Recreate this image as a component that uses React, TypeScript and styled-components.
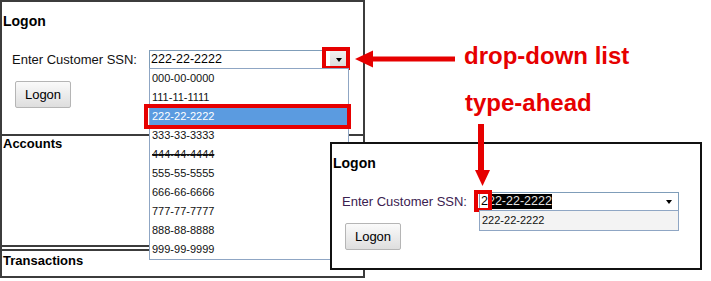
import React from "react";
import styled, { createGlobalStyle, css } from "styled-components";

const GlobalStyle = createGlobalStyle`
  html, body { margin: 0; padding: 0; background: #fff; }
  body { font-family: "Liberation Sans", Arial, sans-serif; }
`;

const RED = "#e60000";

const Canvas = styled.div`
  position: relative;
  width: 711px;
  height: 281px;
  display: flex;
  align-items: flex-start;
  overflow: hidden;
  background: #fff;
`;

const Window = styled.div<{ $overlay?: boolean }>`
  box-sizing: border-box;
  display: flex;
  flex-direction: column;
  background: #fff;
  ${(p) =>
    p.$overlay
      ? css`
          position: absolute;
          left: 330px;
          top: 142px;
          width: 372px;
          height: 128px;
          border: 2px solid #111;
          z-index: 2;
        `
      : css`
          flex: none;
          width: 365px;
          height: 278px;
          border: 2px solid #3c3c3c;
        `}
`;

const LogonSection = styled.section<{ $grow?: boolean }>`
  position: relative;
  z-index: 1;
  display: flex;
  flex-direction: column;
  align-items: flex-start;
  padding-top: 10px;
  box-sizing: border-box;
  ${(p) => (p.$grow ? "flex: 1;" : "flex: none; height: 132px;")}
`;

const Title = styled.h2<{ $size?: number; $lh?: number }>`
  margin: 0;
  padding-left: 1px;
  font-size: ${(p) => p.$size ?? 13}px;
  line-height: ${(p) => p.$lh ?? 16}px;
  font-weight: bold;
  color: #000;
`;

const FormRow = styled.div`
  display: flex;
  align-items: center;
  margin-top: 20px;
  height: 19px;
`;

const Label = styled.label<{ $tint?: boolean }>`
  box-sizing: border-box;
  width: 147px;
  padding-left: 10px;
  font-size: 13px;
  line-height: 16px;
  color: ${(p) => (p.$tint ? "#3b2150" : "#111")};
  white-space: nowrap;
`;

const Combo = styled.div`
  position: relative;
  box-sizing: border-box;
  width: 200px;
  height: 19px;
  border: 1px solid #7f9db9;
  display: flex;
  align-items: center;
  background: #fff;
`;

const ComboText = styled.div`
  flex: 1;
  display: flex;
  align-items: center;
  padding-left: 1px;
  font-size: 12.5px;
  line-height: 15px;
  color: #000;
  white-space: nowrap;
`;

const TypedChar = styled.span<{ $marked?: boolean }>`
  position: relative;
  display: inline-block;
  ${(p) =>
    p.$marked &&
    css`
      &::after {
        content: "";
        position: absolute;
        left: -7px;
        right: -4px;
        top: -4px;
        bottom: -3px;
        border: 4px solid ${RED};
      }
    `}
`;

const Selection = styled.span`
  display: inline-block;
  background: #000;
  color: #e4e4e4;
`;

const ComboButton = styled.div<{ $pressed?: boolean; $marked?: boolean }>`
  position: relative;
  flex: none;
  width: 17px;
  height: 17px;
  margin-right: 1px;
  display: flex;
  align-items: center;
  justify-content: center;
  background: ${(p) =>
    p.$pressed ? "linear-gradient(#f2f2f2, #d9d9d9)" : "transparent"};
  &::before {
    content: "";
    border-left: 3.5px solid transparent;
    border-right: 3.5px solid transparent;
    border-top: 4px solid #000;
  }
  ${(p) =>
    p.$marked &&
    css`
      &::after {
        content: "";
        position: absolute;
        left: -8px;
        right: -3px;
        top: -4px;
        bottom: -2px;
        border: 4px solid ${RED};
      }
    `}
`;

const DropList = styled.ul`
  position: absolute;
  left: -1px;
  top: 17px;
  width: 200px;
  box-sizing: border-box;
  margin: 0;
  padding: 0;
  list-style: none;
  border: 1px solid #8fa6c4;
  background: #fff;
  z-index: 1;
`;

const Option = styled.li<{
  $selected?: boolean;
  $struck?: boolean;
  $marked?: boolean;
  $shade?: boolean;
}>`
  position: relative;
  height: 19px;
  line-height: 19px;
  padding-left: 2px;
  font-size: 11px;
  color: ${(p) => (p.$selected ? "#fff" : "#111")};
  background: ${(p) =>
    p.$selected ? "#5b9be0" : p.$shade ? "#f3f3f3" : "transparent"};
  text-decoration: ${(p) => (p.$struck ? "line-through" : "none")};
  ${(p) =>
    p.$marked &&
    css`
      &::after {
        content: "";
        position: absolute;
        left: -6px;
        right: -3px;
        top: -3px;
        bottom: -3px;
        border: 4px solid ${RED};
      }
    `}
`;

const LogonButton = styled.button`
  box-sizing: border-box;
  margin: 12px 0 0 13px;
  width: 56px;
  height: 27px;
  padding: 0;
  border: 1px solid #b5b5b5;
  border-radius: 2px;
  background: linear-gradient(#fafafa, #dedede);
  font-family: "Liberation Sans", Arial, sans-serif;
  font-size: 13px;
  color: #000;
`;

const AccountsSection = styled.section`
  flex: none;
  height: 109px;
  border-top: 2px solid #3c3c3c;
  border-bottom: 2px solid #3c3c3c;
`;

const TransactionsSection = styled.section`
  flex: 1;
  margin-top: 2px;
  padding-top: 2px;
  border-top: 2px solid #3c3c3c;
`;

const Notes = styled.div`
  position: relative;
  z-index: 3;
  flex: 1;
  display: flex;
  flex-direction: column;
  align-items: flex-start;
  padding-top: 42px;
`;

const NoteRow = styled.div<{ $indent: number; $gap?: number }>`
  display: flex;
  align-items: flex-start;
  gap: 9px;
  margin-left: ${(p) => p.$indent}px;
  margin-top: ${(p) => p.$gap ?? 0}px;
`;

const NoteText = styled.span`
  font-family: "Liberation Sans", Arial, sans-serif;
  font-weight: bold;
  font-size: 24px;
  line-height: 28px;
  color: ${RED};
  white-space: nowrap;
`;

const LeftArrow = styled.svg`
  flex: none;
  margin-top: 8px;
`;

const DownArrow = styled.svg`
  flex: none;
  margin: 7px 0 0 110px;
`;

const ssns = [
  "000-00-0000",
  "111-11-1111",
  "222-22-2222",
  "333-33-3333",
  "444-44-4444",
  "555-55-5555",
  "666-66-6666",
  "777-77-7777",
  "888-88-8888",
  "999-99-9999",
];

export default function App() {
  return (
    <>
      <GlobalStyle />
      <Canvas>
        <Window>
          <LogonSection>
            <Title $size={14} $lh={18}>
              Logon
            </Title>
            <FormRow>
              <Label>Enter Customer SSN:</Label>
              <Combo>
                <ComboText>222-22-2222</ComboText>
                <ComboButton $pressed $marked />
                <DropList>
                  {ssns.map((s) => (
                    <Option
                      key={s}
                      $selected={s === "222-22-2222"}
                      $marked={s === "222-22-2222"}
                      $struck={s === "444-44-4444"}
                    >
                      {s}
                    </Option>
                  ))}
                </DropList>
              </Combo>
            </FormRow>
            <LogonButton>Logon</LogonButton>
          </LogonSection>
          <AccountsSection>
            <Title>Accounts</Title>
          </AccountsSection>
          <TransactionsSection>
            <Title>Transactions</Title>
          </TransactionsSection>
        </Window>

        <Notes>
          <NoteRow $indent={-10}>
            <LeftArrow width="100" height="18" viewBox="0 0 100 18">
              <polygon points="0,9 18,0.5 18,17.5" fill={RED} />
              <rect x="17" y="6.5" width="83" height="5" fill={RED} />
            </LeftArrow>
            <NoteText>drop-down list</NoteText>
          </NoteRow>
          <NoteRow $indent={100} $gap={19}>
            <NoteText>type-ahead</NoteText>
          </NoteRow>
          <DownArrow width="15" height="62" viewBox="0 0 15 62">
            <rect x="3" y="0" width="6" height="47" fill={RED} />
            <polygon points="0,46 15,46 7.5,62" fill={RED} />
          </DownArrow>
        </Notes>

        <Window $overlay>
          <LogonSection $grow>
            <Title $size={14} $lh={18}>
              Logon
            </Title>
            <FormRow>
              <Label $tint>Enter Customer SSN:</Label>
              <Combo>
                <ComboText>
                  <TypedChar $marked>2</TypedChar>
                  <Selection>22-22-2222</Selection>
                </ComboText>
                <ComboButton />
                <DropList>
                  <Option $shade>222-22-2222</Option>
                </DropList>
              </Combo>
            </FormRow>
            <LogonButton>Logon</LogonButton>
          </LogonSection>
        </Window>
      </Canvas>
    </>
  );
}
